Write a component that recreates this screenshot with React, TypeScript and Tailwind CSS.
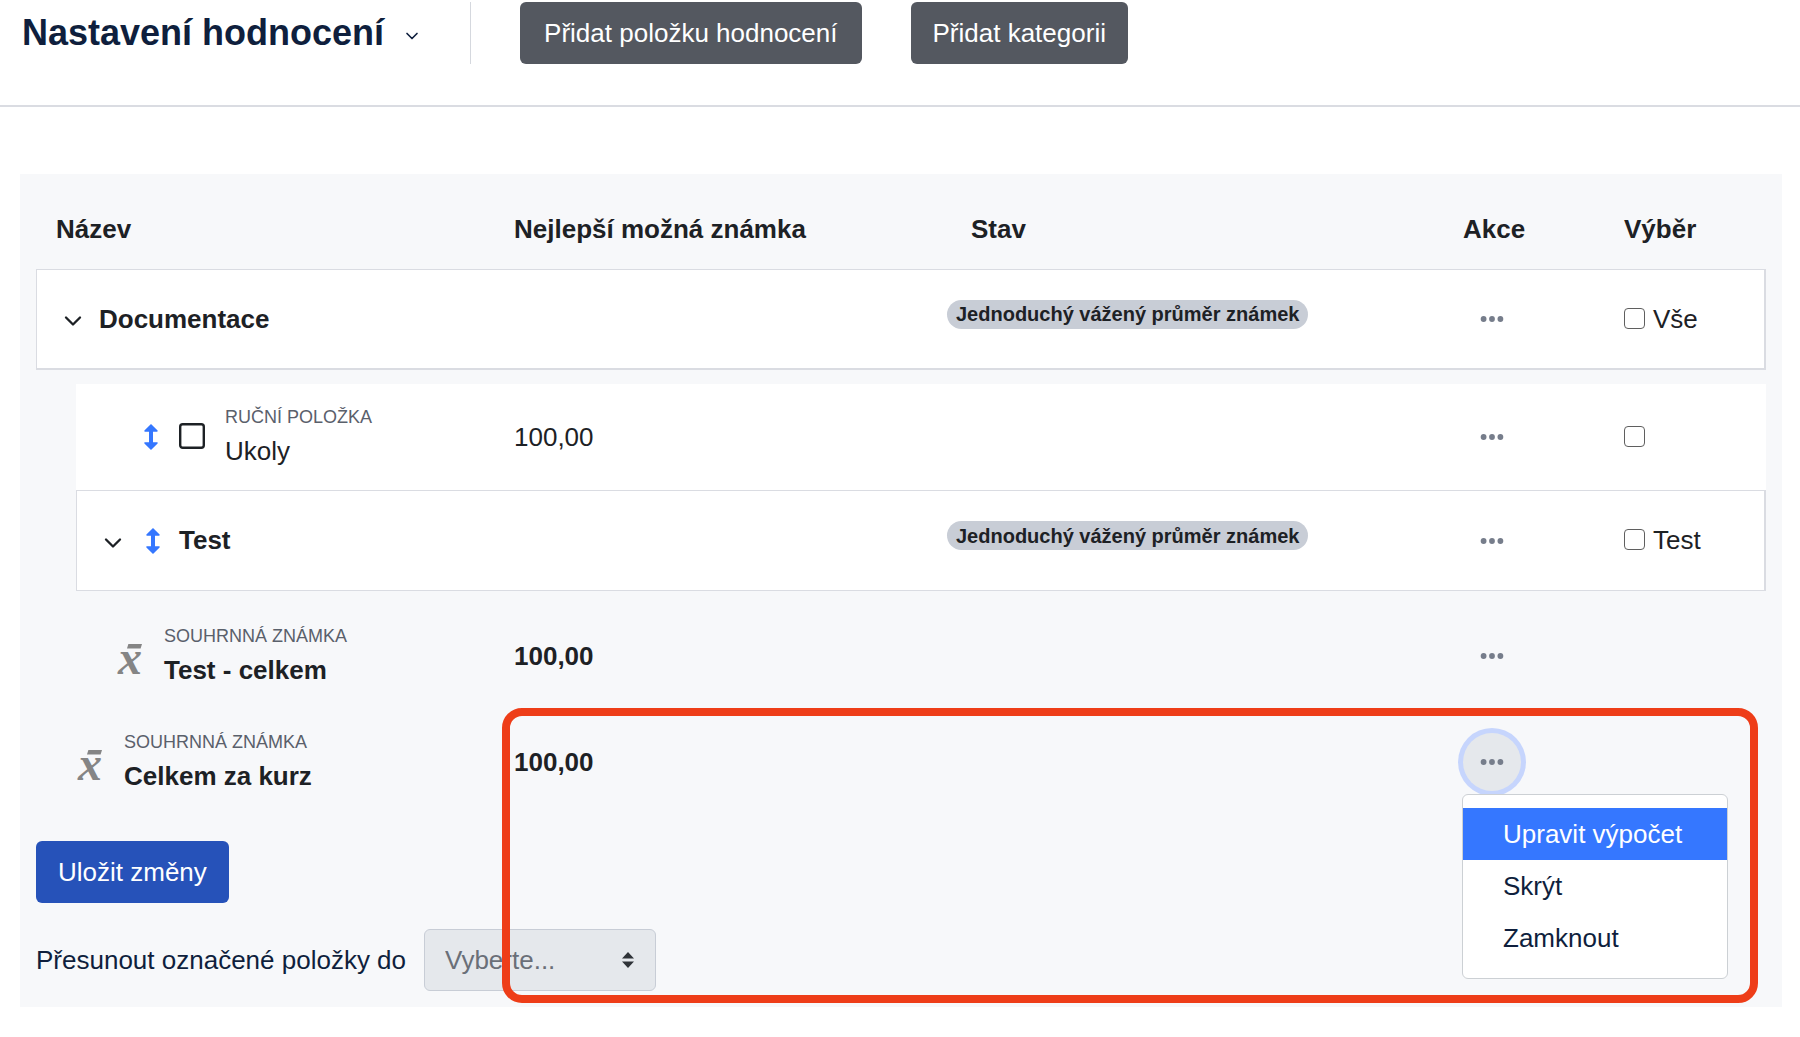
import React from 'react';
import { ChevronDown } from 'lucide-react';

const MoveIcon: React.FC = () => (
    <svg viewBox="0 0 28 28" className="h-7 w-7 shrink-0 fill-[#3577ff]" aria-hidden="true">
        <path d="M14 1L20.6 7.6Q21.2 8.7 20 8.8H16V19.2H20Q21.2 19.3 20.6 20.4L14 27L7.4 20.4Q6.8 19.3 8 19.2H12V8.8H8Q6.8 8.7 7.4 7.6Z" />
    </svg>
);

const ManualIcon: React.FC = () => (
    <svg viewBox="0 0 28 28" className="h-7 w-7 shrink-0 fill-none stroke-[#1d2125]" aria-hidden="true">
        <rect x="3.2" y="1.2" width="23.6" height="23.6" rx="2.5" strokeWidth="2.4" />
    </svg>
);

const MeanIcon: React.FC = () => (
    <svg viewBox="0 0 28 40" className="h-10 w-7 shrink-0 overflow-visible fill-[#858585]" aria-hidden="true">
        <path d="M12.4 8H26L24.6 12.4H11Z" />
        <text x="2" y="38" className="font-['Liberation_Serif',serif] text-[48px] font-bold italic">
            x
        </text>
    </svg>
);

const Toggle: React.FC<{ name: string }> = ({ name }) => (
    <button type="button" aria-label={name} aria-expanded="true" className="shrink-0 pt-1">
        <ChevronDown className="h-7 w-7 text-[#1d2125]" />
    </button>
);

const ActionButton: React.FC<{ active?: boolean }> = ({ active }) => (
    <button
        type="button"
        aria-label="Akce"
        className={
            active
                ? 'flex h-[58px] w-[58px] items-center justify-center rounded-full bg-[#e5e8ec] ring-5 ring-[#c6d5fd]'
                : 'flex h-[58px] w-[58px] items-center justify-center rounded-full'
        }
    >
        <svg viewBox="0 0 24 8" className="h-2 w-6 fill-[#767d8b]" aria-hidden="true">
            <circle cx="3.6" cy="4" r="2.9" />
            <circle cx="12" cy="4" r="2.9" />
            <circle cx="20.4" cy="4" r="2.9" />
        </svg>
    </button>
);

const ActionMenu: React.FC = () => (
    <div className="absolute top-full -left-px z-10 mt-[3px] w-[266px] rounded-md border border-[#ccd0d4] bg-white pt-[13px] pb-3.5">
        <a href="#vypocet" className="flex h-[52px] items-center bg-[#3577ff] pl-10 text-white">
            Upravit výpočet
        </a>
        <a href="#skryt" className="flex h-[52px] items-center pl-10 text-[#0f1f3d]">
            Skrýt
        </a>
        <a href="#zamknout" className="flex h-[52px] items-center pl-10 text-[#0f1f3d]">
            Zamknout
        </a>
    </div>
);

const SelectBox: React.FC<{ label?: string }> = ({ label }) => (
    <label className="flex items-center gap-2">
        <input
            type="checkbox"
            aria-label={label ? undefined : 'Ukoly'}
            className="mb-0.5 h-[21px] w-[21px] appearance-none rounded-sm border border-[#5f5f5f] bg-white"
        />
        {label}
    </label>
);

const Badge: React.FC = () => (
    <span className="flex h-[29px] w-fit items-center rounded-full bg-[#c8cdd6] px-[9px] text-xl font-bold whitespace-nowrap">
        Jednoduchý vážený průměr známek
    </span>
);

const ItemName: React.FC<{ kind: string; children: React.ReactNode }> = ({ kind, children }) => (
    <div>
        <div className="text-lg leading-7 font-normal text-[#5a606b]">{kind}</div>
        <div className="leading-10">{children}</div>
    </div>
);

const App: React.FC = () => {
    return (
        <div className="min-h-screen bg-white font-['Liberation_Sans',Arial,sans-serif] text-[26px] leading-[39px] text-[#1d2125]">
            <header className="flex h-[107px] items-start border-b-2 border-[#dadce2] pt-0.5 pl-[22px]">
                <h1 className="flex h-[62px] items-center text-4xl font-bold text-[#0f1f3d]">
                    <button type="button" className="flex items-center gap-[18px]">
                        Nastavení hodnocení
                        <ChevronDown className="mt-1.5 h-5 w-5" />
                    </button>
                </h1>
                <div className="ml-12 h-[62px] w-px bg-[#d5d8de]" />
                <div className="ml-[49px] flex gap-[49px]">
                    <button type="button" className="h-[62px] rounded-md bg-[#545860] px-6 text-white">
                        Přidat položku hodnocení
                    </button>
                    <button type="button" className="h-[62px] rounded-md bg-[#545860] px-[22px] text-white">
                        Přidat kategorii
                    </button>
                </div>
            </header>

            <main className="relative mt-[67px] mr-[18px] ml-5 bg-[#f7f8fa] p-4">
                <table className="w-full table-fixed border-separate border-spacing-0 text-left">
                    <colgroup>
                        <col className="w-10" />
                        <col className="w-[418px]" />
                        <col className="w-[453px]" />
                        <col />
                        <col className="w-[161px]" />
                        <col className="w-[162px]" />
                    </colgroup>
                    <thead>
                        <tr className="h-[79px]">
                            <th colSpan={2} className="pl-5">Název</th>
                            <th className="pl-5">Nejlepší možná známka</th>
                            <th className="pl-6">Stav</th>
                            <th className="pl-5">Akce</th>
                            <th className="pl-5">Výběr</th>
                        </tr>
                    </thead>
                    <tbody>
                        <tr className="h-[101px] bg-white">
                            <td colSpan={2} className="border-t border-b-2 border-l border-[#dadce2] pl-[22px]">
                                <div className="flex items-center gap-3 font-bold">
                                    <Toggle name="Sbalit Documentace" />
                                    Documentace
                                </div>
                            </td>
                            <td className="border-t border-b-2 border-[#dadce2]" />
                            <td className="border-t border-b-2 border-[#dadce2] pb-2.5">
                                <Badge />
                            </td>
                            <td className="border-t border-b-2 border-[#dadce2] pl-5">
                                <ActionButton />
                            </td>
                            <td className="border-t border-r-2 border-b-2 border-[#dadce2] pl-5">
                                <SelectBox label="Vše" />
                            </td>
                        </tr>
                        <tr className="h-3.5">
                            <td colSpan={6} />
                        </tr>
                        <tr className="h-[106px]">
                            <td />
                            <td className="bg-white pl-[61px]">
                                <div className="flex items-center gap-3">
                                    <MoveIcon />
                                    <ManualIcon />
                                    <div className="ml-2">
                                        <ItemName kind="RUČNÍ POLOŽKA">Ukoly</ItemName>
                                    </div>
                                </div>
                            </td>
                            <td className="bg-white pl-5">100,00</td>
                            <td className="bg-white" />
                            <td className="bg-white pl-5">
                                <ActionButton />
                            </td>
                            <td className="bg-white pl-5">
                                <SelectBox />
                            </td>
                        </tr>
                        <tr className="h-[101px]">
                            <td />
                            <td className="border-y border-l border-[#dadce2] bg-white pl-[22px]">
                                <div className="flex items-center gap-3 font-bold">
                                    <Toggle name="Sbalit Test" />
                                    <MoveIcon />
                                    Test
                                </div>
                            </td>
                            <td className="border-y border-[#dadce2] bg-white" />
                            <td className="border-y border-[#dadce2] bg-white pb-2.5">
                                <Badge />
                            </td>
                            <td className="border-y border-[#dadce2] bg-white pl-5">
                                <ActionButton />
                            </td>
                            <td className="border-y border-r-2 border-[#dadce2] bg-white pl-5">
                                <SelectBox label="Test" />
                            </td>
                        </tr>
                        <tr className="h-3">
                            <td colSpan={6} />
                        </tr>
                        <tr className="h-[106px] font-bold">
                            <td />
                            <td className="pl-10">
                                <div className="flex items-center gap-5">
                                    <MeanIcon />
                                    <ItemName kind="SOUHRNNÁ ZNÁMKA">Test - celkem</ItemName>
                                </div>
                            </td>
                            <td className="pl-5">100,00</td>
                            <td />
                            <td className="pl-5">
                                <ActionButton />
                            </td>
                            <td />
                        </tr>
                        <tr className="h-[106px] font-bold">
                            <td colSpan={2} className="pl-10">
                                <div className="flex items-center gap-5">
                                    <MeanIcon />
                                    <ItemName kind="SOUHRNNÁ ZNÁMKA">Celkem za kurz</ItemName>
                                </div>
                            </td>
                            <td className="pl-5">100,00</td>
                            <td />
                            <td className="pl-5">
                                <div className="relative w-fit font-normal">
                                    <ActionButton active />
                                    <ActionMenu />
                                </div>
                            </td>
                            <td />
                        </tr>
                    </tbody>
                </table>

                <button type="submit" className="mt-[26px] block h-[62px] rounded-md bg-[#2652b9] px-[22px] text-white">
                    Uložit změny
                </button>

                <div className="mt-[26px] flex items-center gap-[18px] text-[#0f1f3d]">
                    <label htmlFor="move">Přesunout označené položky do</label>
                    <div className="relative">
                        <select
                            id="move"
                            disabled
                            className="h-[62px] w-[232px] appearance-none rounded-md border border-[#c8cdd6] bg-[#e5e8ec] px-5 text-[#6a6f78] opacity-100"
                        >
                            <option>Vyberte...</option>
                        </select>
                        <svg
                            viewBox="0 0 12 16"
                            className="pointer-events-none absolute top-[23px] right-[22px] h-4 w-3 fill-[#2f3338]"
                            aria-hidden="true"
                        >
                            <path d="M6 0L12 6.5H0ZM6 16L0 9.5H12Z" />
                        </svg>
                    </div>
                </div>

                {/* Highlight frame around the open menu */}
                <div className="pointer-events-none absolute top-[534px] right-6 bottom-1 left-[482px] rounded-[20px] border-8 border-[#ee3d18]" />
            </main>
        </div>
    );
};

export default App;
